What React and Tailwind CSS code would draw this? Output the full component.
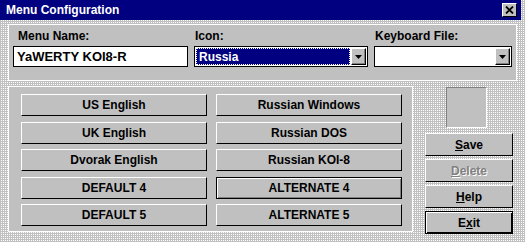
const dither =
  "bg-[#c0c0c0] bg-[conic-gradient(#ffffff_0_25%,#c0c0c0_0)] bg-[length:2px_2px]";

function DropArrow() {
  return (
    <div className="w-[15px] h-full bg-[#c0c0c0] border border-t-white border-l-white border-b-black border-r-black shadow-[inset_-1px_-1px_0_#808080] flex items-center justify-center">
      <svg width="7" height="4" viewBox="0 0 7 4">
        <path d="M0 0h7L3.5 4z" fill="#000" />
      </svg>
    </div>
  );
}

function KeyButton({ label, active }) {
  return (
    <button
      className={`h-[22px] w-full bg-[#c0c0c0] text-[12px] font-bold text-black leading-none flex items-center justify-center ${
        active
          ? "border border-black shadow-[inset_1px_1px_0_#ffffff,inset_-1px_-1px_0_#808080]"
          : "border border-t-white border-l-white border-b-black border-r-black"
      }`}
    >
      {label}
    </button>
  );
}

function SideButton({ children, disabled, isDefault }) {
  return (
    <button
      className={`h-[23px] w-full bg-[#c0c0c0] text-[12px] font-bold leading-none flex items-center justify-center ${
        isDefault
          ? "border border-black shadow-[inset_1px_1px_0_#ffffff,inset_-1px_-1px_0_#000000]"
          : "border border-t-white border-l-white border-b-black border-r-black"
      } ${disabled ? "text-[#808080] [text-shadow:1px_1px_0_#ffffff]" : "text-black"}`}
    >
      {children}
    </button>
  );
}

export default function App() {
  const left = ["US English", "UK English", "Dvorak English", "DEFAULT 4", "DEFAULT 5"];
  const right = ["Russian Windows", "Russian DOS", "Russian KOI-8", "ALTERNATE 4", "ALTERNATE 5"];

  return (
    <div
      className={`w-[525px] h-[242px] overflow-hidden flex flex-col font-['Liberation_Sans',Arial,sans-serif] ${dither}`}
    >
      {/* title bar */}
      <div className="h-[20px] shrink-0 bg-[#000080] flex items-center justify-between pl-[6px] pr-[4px] mr-[4px]">
        <span className="text-white text-[12px] font-bold leading-none">Menu Configuration</span>
        <div className="w-[15px] h-[14px] bg-[#c0c0c0] border border-t-white border-l-white border-b-black border-r-black flex items-center justify-center">
          <svg width="9" height="8" viewBox="0 0 9 8">
            <path d="M1 0.5L8 7.5M8 0.5L1 7.5" stroke="#000" strokeWidth="1.8" />
          </svg>
        </div>
      </div>

      <div className="flex-1 flex flex-col pt-[4px] pl-[8px] pr-[8px]">
        {/* top panel */}
        <div className="h-[57px] bg-[#c0c0c0] border border-white flex gap-[6px] pl-[4px] pt-[4px]">
          <div className="w-[175px] flex flex-col">
            <label className="text-[12px] font-bold leading-[14px] pl-[5px] h-[17px]">Menu Name:</label>
            <div className="h-[21px] bg-white border border-black flex items-center pl-[3px] text-[13px] font-bold leading-none">
              YaWERTY KOI8-R
            </div>
          </div>
          <div className="w-[174px] flex flex-col">
            <label className="text-[12px] font-bold leading-[14px] pl-[1px] h-[17px]">Icon:</label>
            <div className="h-[21px] bg-white border border-black flex p-[1px] gap-[1px]">
              <div className="flex-1 bg-[#000080] outline-1 outline-dotted outline-white -outline-offset-1 flex items-center pl-[3px] text-white text-[12px] font-bold leading-none">
                Russia
              </div>
              <DropArrow />
            </div>
          </div>
          <div className="w-[138px] flex flex-col">
            <label className="text-[12px] font-bold leading-[14px] pl-[1px] h-[17px]">Keyboard File:</label>
            <div className="h-[21px] bg-white border border-black flex justify-end p-[1px]">
              <DropArrow />
            </div>
          </div>
        </div>

        {/* lower area */}
        <div className="flex mt-[5px]">
          <div className="w-[405px] h-[146px] bg-[#c0c0c0] border border-white grid grid-cols-2 gap-x-[9px] pl-[12px] pr-[10px] pt-[7px]">
            <div className="flex flex-col gap-[5.5px]">
              {left.map((l) => (
                <KeyButton key={l} label={l} />
              ))}
            </div>
            <div className="flex flex-col gap-[5.5px]">
              {right.map((l) => (
                <KeyButton key={l} label={l} active={l === "ALTERNATE 4"} />
              ))}
            </div>
          </div>

          <div className="flex-1 flex flex-col pl-[12px] pt-[1px]">
            <div className="w-[41px] h-[41px] ml-[21px] bg-[#c0c0c0] border border-t-[#808080] border-l-[#808080] border-b-white border-r-white" />
            <div className="w-[88px] flex flex-col gap-[3px] mt-[5px]">
              <SideButton>
                <span>
                  <u>S</u>ave
                </span>
              </SideButton>
              <SideButton disabled>
                <span>
                  <u>D</u>elete
                </span>
              </SideButton>
              <SideButton>
                <span>
                  <u>H</u>elp
                </span>
              </SideButton>
              <SideButton isDefault>
                <span>
                  E<u>x</u>it
                </span>
              </SideButton>
            </div>
          </div>
        </div>
      </div>
    </div>
  );
}
